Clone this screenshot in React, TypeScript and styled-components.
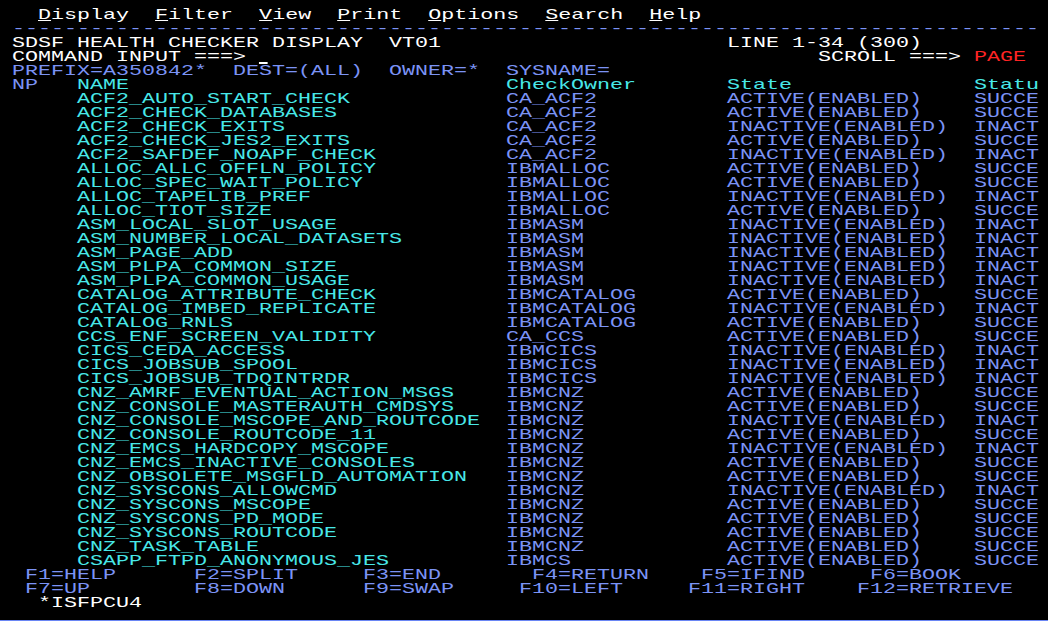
import React from 'react';
import styled, { createGlobalStyle } from 'styled-components';

const FONT_PX = 15;
const ADV = FONT_PX * 0.60009765625;
const SCALE = 13 / ADV;

const COLORS = {
  W: '#ffffff',
  B: '#7b93f5',
  T: '#48e8e8',
  R: '#ff2424',
};
type ColorKey = keyof typeof COLORS;

const GlobalStyle = createGlobalStyle`
  html, body { margin: 0; padding: 0; background: #000; }
  body { overflow: hidden; }
`;

const Screen = styled.div`
  width: 1048px;
  height: 621px;
  box-sizing: border-box;
  background: #000;
  border-bottom: 1px solid #6a86f4;
  padding-top: 9px;
  overflow: hidden;
`;

const Grid = styled.div`
  width: ${80 * ADV}px;
  margin-left: -1px;
  transform: scaleX(${SCALE});
  transform-origin: 0 0;
  font-family: "Liberation Mono", monospace;
  font-size: ${FONT_PX}px;
  display: flex;
  flex-direction: column;
`;

const Line = styled.div`
  height: 14px;
  line-height: 14px;
  white-space: pre;
  color: #fff;
`;

const Seg = styled.span<{ $c: ColorKey }>`
  display: inline-block;
  height: 14px;
  line-height: 14px;
  vertical-align: top;
  color: ${(p) => COLORS[p.$c]};
`;

const Hot = styled.span`
  text-decoration: underline;
  text-underline-offset: 1px;
  text-decoration-thickness: 1px;
`;

const Cursor = styled.span`
  display: inline-block;
  width: 1ch;
  height: 14px;
  vertical-align: top;
  background: linear-gradient(#fff, #fff) no-repeat 0 11px / 70% 2px;
`;

type Piece = { col: number; text: string; c: ColorKey; kind?: 'menu' | 'cursor' };

function renderLine(pieces: Piece[]) {
  const out: React.ReactNode[] = [];
  let cur = 0;
  pieces.forEach((p, i) => {
    if (p.col > cur) {
      out.push(' '.repeat(p.col - cur));
      cur = p.col;
    }
    if (p.kind === 'menu') {
      out.push(
        <Seg key={i} $c={p.c}>
          <Hot>{p.text[0]}</Hot>
          {p.text.slice(1)}
        </Seg>
      );
    } else if (p.kind === 'cursor') {
      out.push(<Cursor key={i} />);
      cur += 1;
      return;
    } else {
      out.push(
        <Seg key={i} $c={p.c}>
          {p.text}
        </Seg>
      );
    }
    cur += p.text.length;
  });
  return out;
}

const rows: [string, string, string, string][] = [
  ['ACF2_AUTO_START_CHECK', 'CA_ACF2', 'ACTIVE(ENABLED)', 'SUCCE'],
  ['ACF2_CHECK_DATABASES', 'CA_ACF2', 'ACTIVE(ENABLED)', 'SUCCE'],
  ['ACF2_CHECK_EXITS', 'CA_ACF2', 'INACTIVE(ENABLED)', 'INACT'],
  ['ACF2_CHECK_JES2_EXITS', 'CA_ACF2', 'ACTIVE(ENABLED)', 'SUCCE'],
  ['ACF2_SAFDEF_NOAPF_CHECK', 'CA_ACF2', 'INACTIVE(ENABLED)', 'INACT'],
  ['ALLOC_ALLC_OFFLN_POLICY', 'IBMALLOC', 'ACTIVE(ENABLED)', 'SUCCE'],
  ['ALLOC_SPEC_WAIT_POLICY', 'IBMALLOC', 'ACTIVE(ENABLED)', 'SUCCE'],
  ['ALLOC_TAPELIB_PREF', 'IBMALLOC', 'INACTIVE(ENABLED)', 'INACT'],
  ['ALLOC_TIOT_SIZE', 'IBMALLOC', 'ACTIVE(ENABLED)', 'SUCCE'],
  ['ASM_LOCAL_SLOT_USAGE', 'IBMASM', 'INACTIVE(ENABLED)', 'INACT'],
  ['ASM_NUMBER_LOCAL_DATASETS', 'IBMASM', 'INACTIVE(ENABLED)', 'INACT'],
  ['ASM_PAGE_ADD', 'IBMASM', 'INACTIVE(ENABLED)', 'INACT'],
  ['ASM_PLPA_COMMON_SIZE', 'IBMASM', 'INACTIVE(ENABLED)', 'INACT'],
  ['ASM_PLPA_COMMON_USAGE', 'IBMASM', 'INACTIVE(ENABLED)', 'INACT'],
  ['CATALOG_ATTRIBUTE_CHECK', 'IBMCATALOG', 'ACTIVE(ENABLED)', 'SUCCE'],
  ['CATALOG_IMBED_REPLICATE', 'IBMCATALOG', 'INACTIVE(ENABLED)', 'INACT'],
  ['CATALOG_RNLS', 'IBMCATALOG', 'ACTIVE(ENABLED)', 'SUCCE'],
  ['CCS_ENF_SCREEN_VALIDITY', 'CA_CCS', 'ACTIVE(ENABLED)', 'SUCCE'],
  ['CICS_CEDA_ACCESS', 'IBMCICS', 'INACTIVE(ENABLED)', 'INACT'],
  ['CICS_JOBSUB_SPOOL', 'IBMCICS', 'INACTIVE(ENABLED)', 'INACT'],
  ['CICS_JOBSUB_TDQINTRDR', 'IBMCICS', 'INACTIVE(ENABLED)', 'INACT'],
  ['CNZ_AMRF_EVENTUAL_ACTION_MSGS', 'IBMCNZ', 'ACTIVE(ENABLED)', 'SUCCE'],
  ['CNZ_CONSOLE_MASTERAUTH_CMDSYS', 'IBMCNZ', 'ACTIVE(ENABLED)', 'SUCCE'],
  ['CNZ_CONSOLE_MSCOPE_AND_ROUTCODE', 'IBMCNZ', 'INACTIVE(ENABLED)', 'INACT'],
  ['CNZ_CONSOLE_ROUTCODE_11', 'IBMCNZ', 'ACTIVE(ENABLED)', 'SUCCE'],
  ['CNZ_EMCS_HARDCOPY_MSCOPE', 'IBMCNZ', 'INACTIVE(ENABLED)', 'INACT'],
  ['CNZ_EMCS_INACTIVE_CONSOLES', 'IBMCNZ', 'ACTIVE(ENABLED)', 'SUCCE'],
  ['CNZ_OBSOLETE_MSGFLD_AUTOMATION', 'IBMCNZ', 'ACTIVE(ENABLED)', 'SUCCE'],
  ['CNZ_SYSCONS_ALLOWCMD', 'IBMCNZ', 'INACTIVE(ENABLED)', 'INACT'],
  ['CNZ_SYSCONS_MSCOPE', 'IBMCNZ', 'ACTIVE(ENABLED)', 'SUCCE'],
  ['CNZ_SYSCONS_PD_MODE', 'IBMCNZ', 'ACTIVE(ENABLED)', 'SUCCE'],
  ['CNZ_SYSCONS_ROUTCODE', 'IBMCNZ', 'ACTIVE(ENABLED)', 'SUCCE'],
  ['CNZ_TASK_TABLE', 'IBMCNZ', 'ACTIVE(ENABLED)', 'SUCCE'],
  ['CSAPP_FTPD_ANONYMOUS_JES', 'IBMCS', 'ACTIVE(ENABLED)', 'SUCCE'],
];

const menu: Piece[] = [
  { col: 3, text: 'Display', c: 'W', kind: 'menu' },
  { col: 12, text: 'Filter', c: 'W', kind: 'menu' },
  { col: 20, text: 'View', c: 'W', kind: 'menu' },
  { col: 26, text: 'Print', c: 'W', kind: 'menu' },
  { col: 33, text: 'Options', c: 'W', kind: 'menu' },
  { col: 42, text: 'Search', c: 'W', kind: 'menu' },
  { col: 50, text: 'Help', c: 'W', kind: 'menu' },
];

const header: Piece[][] = [
  [{ col: 1, text: '-'.repeat(79), c: 'B' }],
  [
    { col: 1, text: 'SDSF HEALTH CHECKER DISPLAY  VT01', c: 'W' },
    { col: 56, text: 'LINE 1-34 (300)', c: 'W' },
  ],
  [
    { col: 1, text: 'COMMAND INPUT ===>', c: 'W' },
    { col: 20, text: '', c: 'W', kind: 'cursor' },
    { col: 63, text: 'SCROLL ===>', c: 'W' },
    { col: 75, text: 'PAGE', c: 'R' },
  ],
  [{ col: 1, text: 'PREFIX=A350842*  DEST=(ALL)  OWNER=*  SYSNAME=', c: 'B' }],
  [
    { col: 1, text: 'NP', c: 'B' },
    { col: 6, text: 'NAME', c: 'T' },
    { col: 39, text: 'CheckOwner', c: 'T' },
    { col: 56, text: 'State', c: 'T' },
    { col: 75, text: 'Statu', c: 'T' },
  ],
];

const footer: Piece[][] = [
  [
    { col: 2, text: 'F1=HELP', c: 'B' },
    { col: 15, text: 'F2=SPLIT', c: 'B' },
    { col: 28, text: 'F3=END', c: 'B' },
    { col: 41, text: 'F4=RETURN', c: 'B' },
    { col: 54, text: 'F5=IFIND', c: 'B' },
    { col: 67, text: 'F6=BOOK', c: 'B' },
  ],
  [
    { col: 2, text: 'F7=UP', c: 'B' },
    { col: 15, text: 'F8=DOWN', c: 'B' },
    { col: 28, text: 'F9=SWAP', c: 'B' },
    { col: 40, text: 'F10=LEFT', c: 'B' },
    { col: 53, text: 'F11=RIGHT', c: 'B' },
    { col: 66, text: 'F12=RETRIEVE', c: 'B' },
  ],
  [{ col: 3, text: '*ISFPCU4', c: 'W' }],
];

export default function App() {
  return (
    <>
      <GlobalStyle />
      <Screen>
        <Grid>
          <Line>{renderLine(menu)}</Line>
          {header.map((p, i) => (
            <Line key={'h' + i}>{renderLine(p)}</Line>
          ))}
          {rows.map((r, i) => (
            <Line key={'r' + i}>
              {renderLine([
                { col: 6, text: r[0], c: 'T' },
                { col: 39, text: r[1], c: 'B' },
                { col: 56, text: r[2], c: 'B' },
                { col: 75, text: r[3], c: 'B' },
              ])}
            </Line>
          ))}
          {footer.map((p, i) => (
            <Line key={'f' + i}>{renderLine(p)}</Line>
          ))}
        </Grid>
      </Screen>
    </>
  );
}
